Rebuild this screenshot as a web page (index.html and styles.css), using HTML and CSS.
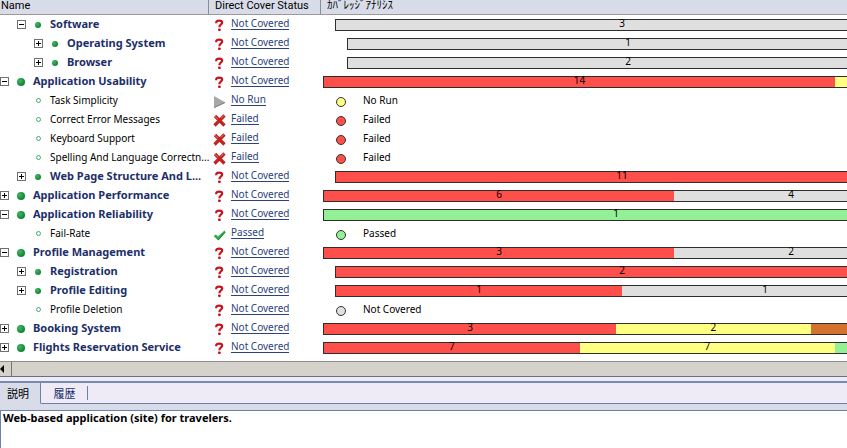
FILE: index.html
```html
<!DOCTYPE html>
<html lang="ja">
<head>
    <meta charset="UTF-8">
    <meta name="viewport" content="width=device-width, initial-scale=1.0">
    <title>Requirements Coverage</title>
    <link rel="stylesheet" href="styles.css">
</head>
<body>
    <svg class="sprite" aria-hidden="true">
        <symbol id="icon-question" viewBox="0 0 13 14">
            <path d="M3.2 5.2 L3.2 4.4 C3.2 2 9.2 2 9.2 4.6 C9.2 6.6 6.4 6.4 6.4 9.2" fill="none" stroke="#c4161c" stroke-width="2.2"/>
            <rect x="5" y="10.6" width="2.8" height="2.4" rx="1" fill="#c4161c"/>
        </symbol>
        <symbol id="icon-norun" viewBox="0 0 13 14">
            <path d="M1 2 L12.5 8.5 L1 14 Z" fill="#a8a8a8"/>
            <path d="M1 13.6 L12 8.5" stroke="#7c7c7c" stroke-width="1"/>
        </symbol>
        <symbol id="icon-failed" viewBox="0 0 13 14">
            <path d="M2 3 L11.5 12.5 M11.5 2.5 L1.5 12.5" stroke="#c4221f" stroke-width="3.2"/>
            <path d="M1.6 3 L5 6.2 M11 2.4 L8 5.4" stroke="#e4736c" stroke-width="1"/>
        </symbol>
        <symbol id="icon-passed" viewBox="0 0 13 14">
            <path d="M0.5 9 L3 7.5 L5 9.5 L11.5 3.5 L12.5 5 L5.2 13.5 Z" fill="#2fae4c"/>
            <path d="M5.2 13 L12.2 5.2" stroke="#157a2d" stroke-width="1"/>
        </symbol>
    </svg>

    <div class="grid">
        <table class="requirements">
            <colgroup>
                <col class="col-name">
                <col class="col-status">
                <col class="col-coverage">
            </colgroup>
            <thead>
                <tr>
                    <th scope="col">Name</th>
                    <th scope="col">Direct Cover Status</th>
                    <th scope="col">ｶﾊﾞﾚｯｼﾞｱﾅﾘｼｽ</th>
                </tr>
            </thead>
            <tbody id="rows"></tbody>
        </table>
    </div>

    <div class="scrollbar">
        <button class="scroll-left" aria-label="Scroll left"><span class="arrow"></span></button>
    </div>

    <div class="details">
        <div class="tabs" role="tablist">
            <button class="tab active" role="tab" aria-selected="true">説明</button>
            <button class="tab" role="tab" aria-selected="false">履歴</button>
        </div>
        <div class="description" role="tabpanel">Web-based application (site) for travelers.</div>
    </div>

    <script src="script.js"></script>
</body>
</html>
```

FILE: styles.css
```css
body {
    font-family: "Noto Sans", "Noto Sans CJK JP", sans-serif;
    font-size: 10px;
    margin: 0;
    min-height: 100vh;
    display: flex;
    flex-direction: column;
    background-color: #fff;
    color: #000;
    overflow: hidden;
}

button {
    font: inherit;
    padding: 0;
    margin: 0;
    border: none;
    background: none;
    cursor: pointer;
}

.sprite {
    display: none;
}

/* the table is wider than its pane */
.grid {
    overflow: hidden;
    padding-bottom: 4px;
}

.requirements {
    width: calc(100% + 62px);
    table-layout: fixed;
    border-collapse: separate;
    border-spacing: 0;
}

.col-name {
    width: 209px;
}

.col-status {
    width: 112px;
}

th {
    box-sizing: border-box;
    height: 15px;
    padding: 0 0 2px 6px;
    font-family: Roboto, "Noto Sans CJK JP", sans-serif;
    font-size: 11px;
    line-height: 12px;
    text-align: left;
    font-weight: normal;
    white-space: nowrap;
    background-color: #d8dce8;
    border-right: 1px solid #8a8d96;
    border-bottom: 1px solid #9a9a9a;
}

th:first-child {
    padding-left: 1px;
}

td {
    height: 19px;
    padding: 0;
    line-height: 15px;
    white-space: nowrap;
}

/* Name column */
.name {
    display: flex;
    align-items: center;
    height: 19px;
}

.level-1 {
    padding-left: 17px;
}

.level-2 {
    padding-left: 34px;
}

.toggle,
.toggle-space {
    flex: none;
    width: 9px;
    height: 9px;
}

.toggle {
    box-sizing: border-box;
    border: 1px solid #707070;
    background-color: #fff;
    background-image: linear-gradient(#000, #000);
    background-size: 5px 1px;
    background-position: center;
    background-repeat: no-repeat;
}

.toggle.collapsed {
    background-image: linear-gradient(#000, #000), linear-gradient(#000, #000);
    background-size: 5px 1px, 1px 5px;
}

.bullet {
    flex: none;
    display: flex;
    align-items: center;
    justify-content: center;
    width: 24px;
}

.bullet::before {
    content: "";
    box-sizing: border-box;
    width: 6px;
    height: 6px;
    border-radius: 50%;
    background: radial-gradient(circle at 35% 35%, #3fb862, #0b7a2f 80%);
}

.level-0 .bullet::before {
    width: 8px;
    height: 8px;
}

.leaf .bullet::before {
    width: 5px;
    height: 5px;
    background: #fff;
    border: 1px solid #3fae6e;
}

.group .title {
    font-size: 11px;
    font-weight: bold;
    line-height: 14px;
    padding-bottom: 1px;
    color: #1c2f68;
}

/* Status column */
.status {
    display: flex;
    align-items: center;
    gap: 5px;
    height: 19px;
    padding-left: 4px;
}

.status svg {
    width: 13px;
    height: 14px;
}

.status a {
    color: #2b427c;
    text-decoration: none;
    line-height: 12px;
    margin-bottom: 2px;
    border-bottom: 1px solid #2b427c;
}

/* Coverage column */
.bar {
    display: flex;
    box-sizing: border-box;
    height: 12px;
    margin: 4px 0 3px 2px;
    border: 1px solid #2e2e2e;
}

.bar-1 {
    margin-left: 14px;
}

.bar-2 {
    margin-left: 26px;
}

.segment {
    flex: 1 1 0;
    line-height: 7px;
    text-align: center;
}

.result {
    display: flex;
    align-items: center;
    gap: 17px;
    height: 19px;
    padding-left: 15px;
}

.dot {
    box-sizing: border-box;
    width: 10px;
    height: 10px;
    margin-top: 3px;
    border: 1px solid #333;
    border-radius: 50%;
}

.failed {
    background-color: #ff4f4b;
}

.norun {
    background-color: #ffff82;
}

.passed {
    background-color: #94f094;
}

.notcovered {
    background-color: #dfdfdf;
}

.notcompleted {
    background-color: #d2722e;
}

/* Horizontal scrollbar */
.scrollbar {
    flex: none;
    display: flex;
    height: 14px;
    border-top: 1px solid #8c8c8c;
    border-bottom: 1px solid #66708c;
    background-color: #d5d2cc;
}

.scroll-left {
    display: flex;
    align-items: center;
    width: 12px;
    border-right: 1px solid #77756f;
}

.arrow {
    border: 4px solid transparent;
    border-left: none;
    border-right-color: #000;
}

/* Details pane */
.details {
    flex: 1;
    display: flex;
    flex-direction: column;
    padding-top: 4px;
    background-color: #eeebf6;
}

.tabs {
    display: flex;
    height: 21px;
    border-top: 2px solid #7a8aae;
}

.tab {
    box-sizing: border-box;
    width: 47px;
    font-size: 11px;
    color: #1c2f68;
    border-bottom: 1px solid #6f81aa;
    background: linear-gradient(#6f81aa, #6f81aa) right center / 1px 14px no-repeat;
}

.tab.active {
    width: 41px;
    padding-right: 4px;
    color: #000;
    background: #d8dce8;
    border-right: 1px solid #6f81aa;
    border-bottom-color: #d8dce8;
}

.tabs::after {
    content: "";
    flex: 1;
    border-bottom: 1px solid #6f81aa;
}

.description {
    flex: 1;
    margin-top: 6px;
    padding-left: 2px;
    font-size: 11px;
    font-weight: bold;
    line-height: 14px;
    background-color: #fff;
    border-left: 1px solid #6f81aa;
    border-top: 1px solid #6f81aa;
    box-shadow: 0 -6px 0 #d8dce8;
}
```

FILE: script.js
```js
const requirements = [
    { name: 'Software', level: 1, open: true, bar: [['notcovered', 3]] },
    { name: 'Operating System', level: 2, open: false, bar: [['notcovered', 1]] },
    { name: 'Browser', level: 2, open: false, bar: [['notcovered', 2]] },
    { name: 'Application Usability', level: 0, open: true, bar: [['failed', 14], ['norun', 2]] },
    { name: 'Task Simplicity', level: 1, status: 'norun' },
    { name: 'Correct Error Messages', level: 1, status: 'failed' },
    { name: 'Keyboard Support', level: 1, status: 'failed' },
    { name: 'Spelling And Language Correctn...', level: 1, status: 'failed' },
    { name: 'Web Page Structure And L...', level: 1, open: false, bar: [['failed', 11]] },
    { name: 'Application Performance', level: 0, open: false, bar: [['failed', 6], ['notcovered', 4]] },
    { name: 'Application Reliability', level: 0, open: true, bar: [['passed', 1]] },
    { name: 'Fail-Rate', level: 1, status: 'passed' },
    { name: 'Profile Management', level: 0, open: true, bar: [['failed', 3], ['notcovered', 2]] },
    { name: 'Registration', level: 1, open: false, bar: [['failed', 2]] },
    { name: 'Profile Editing', level: 1, open: false, bar: [['failed', 1], ['notcovered', 1]] },
    { name: 'Profile Deletion', level: 1, status: 'notcovered' },
    { name: 'Booking System', level: 0, open: false, bar: [['failed', 3], ['norun', 2], ['notcompleted', 1]] },
    { name: 'Flights Reservation Service', level: 0, open: false, bar: [['failed', 7], ['norun', 7], ['passed', 2]] }
];

const labels = {
    notcovered: 'Not Covered',
    norun: 'No Run',
    failed: 'Failed',
    passed: 'Passed'
};

const icons = {
    notcovered: 'icon-question',
    norun: 'icon-norun',
    failed: 'icon-failed',
    passed: 'icon-passed'
};

function coverage(item) {
    if (!item.bar) {
        return `<div class="result"><span class="dot ${item.status}"></span>${labels[item.status]}</div>`;
    }
    const segments = item.bar.map(([type, count]) =>
        `<div class="segment ${type}" style="flex-grow: ${count}">${count}</div>`);
    return `<div class="bar bar-${item.level}">${segments.join('')}</div>`;
}

document.getElementById('rows').innerHTML = requirements.map((item) => {
    const status = item.status || 'notcovered';
    const toggle = item.bar
        ? `<button class="toggle ${item.open ? '' : 'collapsed'}" aria-label="Toggle ${item.name}" aria-expanded="${item.open}"></button>`
        : '<span class="toggle-space"></span>';
    return `<tr>
        <td><div class="name level-${item.level} ${item.bar ? 'group' : 'leaf'}">
            ${toggle}<span class="bullet"></span><span class="title">${item.name}</span>
        </div></td>
        <td><div class="status">
            <svg aria-hidden="true"><use href="#${icons[status]}"/></svg><a href="#">${labels[status]}</a>
        </div></td>
        <td>${coverage(item)}</td>
    </tr>`;
}).join('');
```
